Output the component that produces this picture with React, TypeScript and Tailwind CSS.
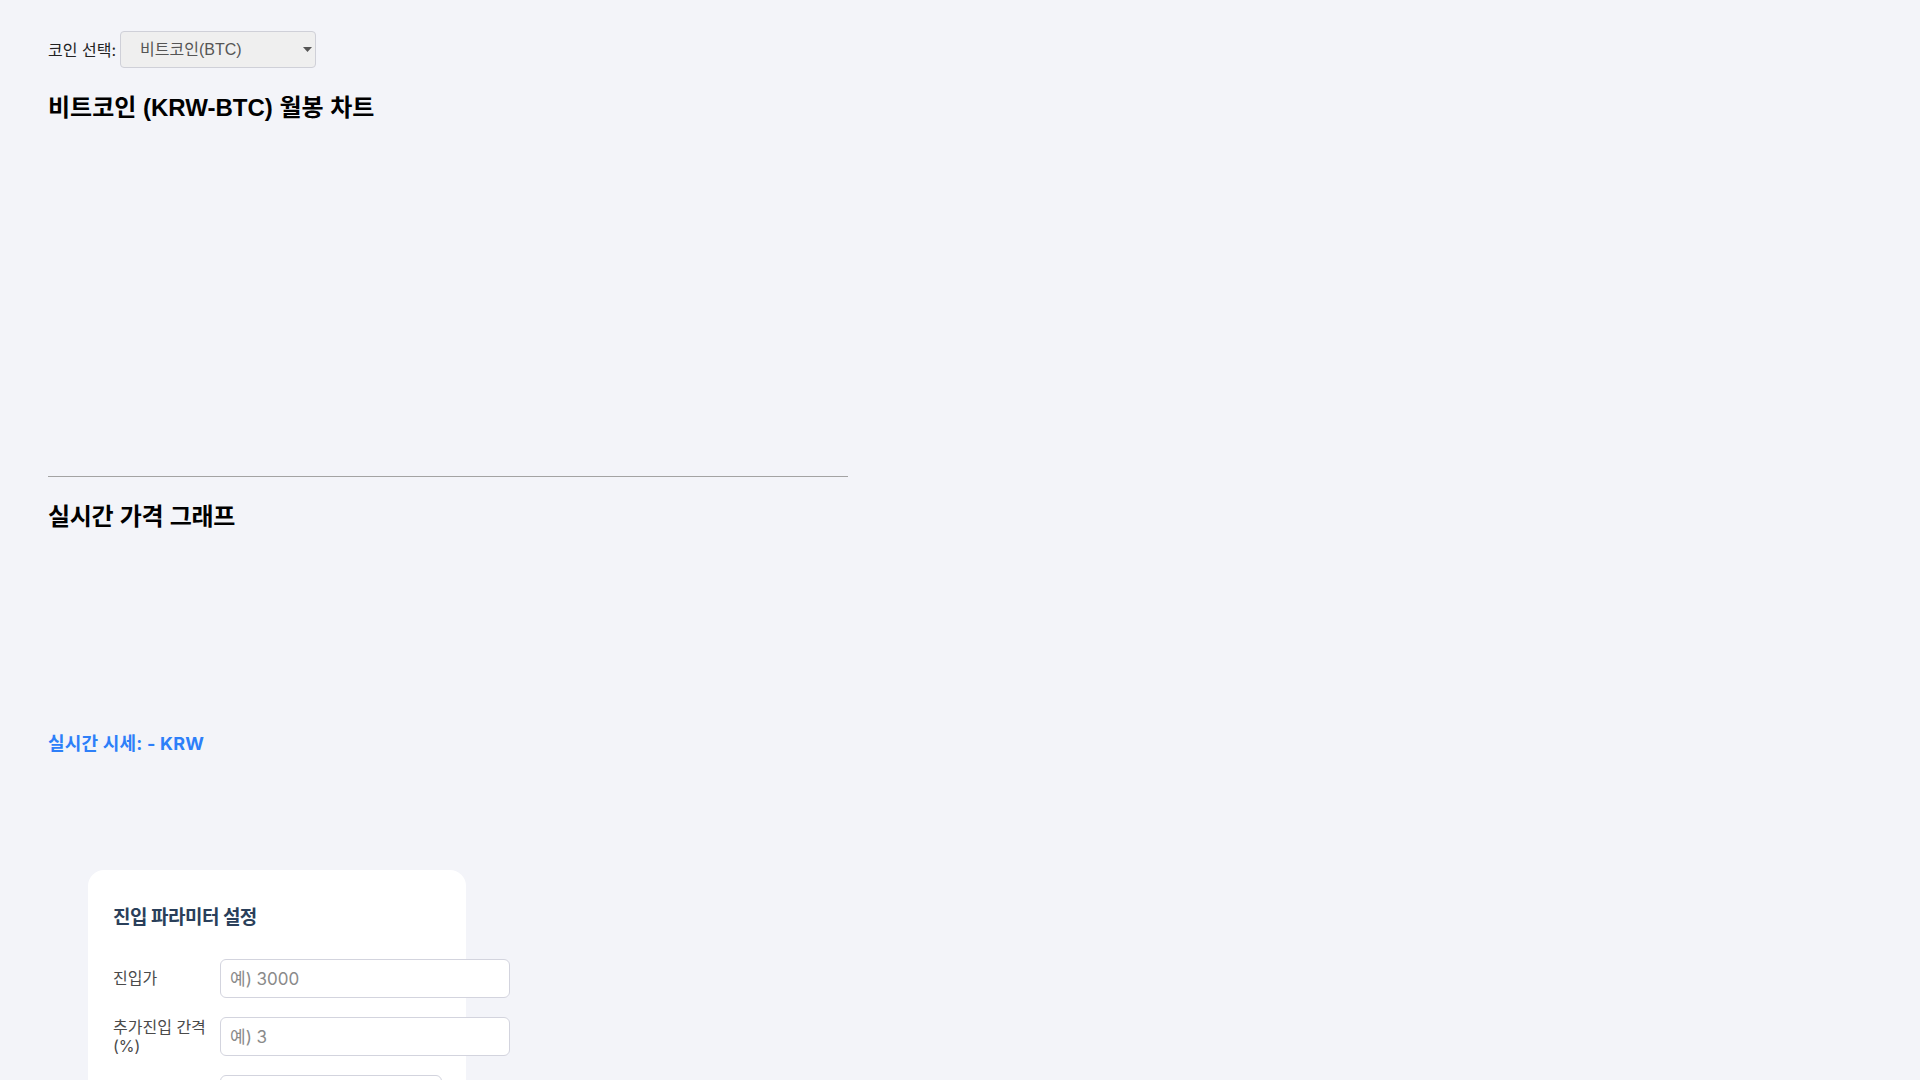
import { useState } from 'react';

const COINS = [
  { value: 'KRW-BTC', label: '비트코인(BTC)', name: '비트코인' },
  { value: 'KRW-ETH', label: '이더리움(ETH)', name: '이더리움' },
  { value: 'KRW-XRP', label: '리플(XRP)', name: '리플' },
];

interface ParamField {
  key: string;
  label: string;
  placeholder: string;
  width: string;
}

const PARAM_FIELDS: ParamField[] = [
  { key: 'entry', label: '진입가', placeholder: '예) 3000', width: 'w-[290px]' },
  { key: 'gap', label: '추가진입 간격 (%)', placeholder: '예) 3', width: 'w-[290px]' },
  { key: 'count', label: '최대 진입 횟수', placeholder: '예) 5', width: 'w-[222px]' },
  { key: 'amount', label: '1회 진입 금액', placeholder: '예) 100000', width: 'w-[222px]' },
  { key: 'target', label: '목표 수익률 (%)', placeholder: '예) 5', width: 'w-[222px]' },
  { key: 'stop', label: '손절 기준 (%)', placeholder: '예) 10', width: 'w-[222px]' },
];

function CoinSelect({ value, onChange }: { value: string; onChange: (v: string) => void }) {
  return (
    <div className="relative ml-[4px]">
      <select
        value={value}
        onChange={(e) => onChange(e.target.value)}
        className="h-[37px] w-[196px] appearance-none rounded-[4px] border border-[#cfd0d8] bg-[#efefef] pl-[19px] text-[16px] text-[#555] outline-none"
      >
        {COINS.map((c) => (
          <option key={c.value} value={c.value}>
            {c.label}
          </option>
        ))}
      </select>
      {/* caret */}
      <svg
        className="pointer-events-none absolute right-[4px] top-[16px]"
        width="9"
        height="5"
        viewBox="0 0 9 5"
      >
        <path d="M0 0h9L4.5 5z" fill="#555" />
      </svg>
    </div>
  );
}

function ParamCard() {
  return (
    <div className="ml-[40px] w-[378px] rounded-[16px] bg-white px-[25px] pb-[32px] pt-[33px] font-['Inter','Noto_Sans_CJK_KR',sans-serif]">
      <h3 className="mb-[26px] text-[19px] font-bold leading-[30px] tracking-[-0.5px] text-[#2a3f5a]">
        진입 파라미터 설정
      </h3>
      <div className="flex flex-col gap-[19px]">
        {PARAM_FIELDS.map((f) => (
          <div key={f.key} className="flex items-center">
            <label className="mr-[7px] w-[100px] shrink-0 text-[16px] leading-[19px] text-[#4a4a4a]">
              {f.label}
            </label>
            <input
              type="text"
              placeholder={f.placeholder}
              className={`${f.width} h-[39px] shrink-0 rounded-[6px] border border-[#d3d4de] bg-white px-[9px] text-[17px] text-[#333] outline-none placeholder:text-[#8a8a8a]`}
            />
          </div>
        ))}
      </div>
      <button className="mt-[28px] h-[44px] w-full rounded-[8px] bg-[#2d7ff9] text-[16px] font-semibold text-white">
        계산하기
      </button>
      <div className="mt-[24px] border-t border-[#e5e7ee] pt-[20px] text-[15px] leading-[24px] text-[#555]">
        <p>평균 단가: -</p>
        <p>총 투자 금액: -</p>
        <p>목표 매도가: -</p>
        <p>손절가: -</p>
      </div>
    </div>
  );
}

export default function App() {
  const [market, setMarket] = useState('KRW-BTC');
  const coin = COINS.find((c) => c.value === market) ?? COINS[0];

  return (
    <div className="h-screen overflow-y-auto bg-[#f3f4f9] text-black [&::-webkit-scrollbar]:w-[10px] [&::-webkit-scrollbar-track]:bg-white [&::-webkit-scrollbar-thumb]:rounded-full [&::-webkit-scrollbar-thumb]:border-2 [&::-webkit-scrollbar-thumb]:border-solid [&::-webkit-scrollbar-thumb]:border-white [&::-webkit-scrollbar-thumb]:bg-[#111]">
      <div className="px-[48px] pb-[230px] pt-[31px] font-['Liberation_Sans','Noto_Sans_CJK_KR',sans-serif]">
        <div className="flex items-center">
          <span className="font-['Inter','Noto_Sans_CJK_KR',sans-serif] text-[16px] text-[#222]">코인 선택:</span>
          <CoinSelect value={market} onChange={setMarket} />
        </div>

        <div className="w-[800px]">
          <h2 className="mt-[25px] text-[24px] font-bold leading-[29px]">
            {coin.name} ({market}) 월봉 차트
          </h2>
          <div className="h-[354px]" />
          <hr className="border-t border-[#a3a3a3]" />

          <h2 className="mt-[25px] text-[24px] font-bold leading-[29px] tracking-[-0.3px]">
            실시간 가격 그래프
          </h2>
          <div className="h-[199px]" />
          <p className="font-['Inter','Noto_Sans_CJK_KR',sans-serif] text-[18px] font-bold leading-[27px] tracking-[0.2px] text-[#2d7ff9]">
            실시간 시세: - KRW
          </p>
        </div>

        <div className="mt-[113px]">
          <ParamCard />
        </div>
      </div>
    </div>
  );
}
